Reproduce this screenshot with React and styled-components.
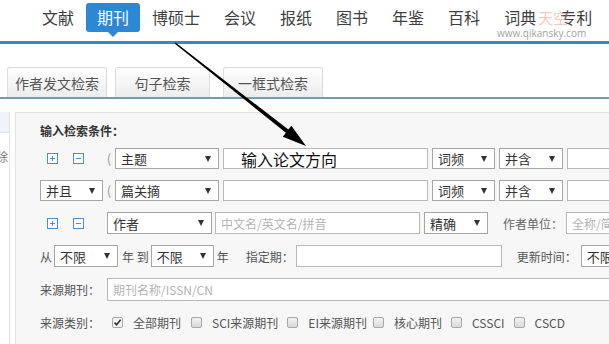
import React from 'react';
import styled, { createGlobalStyle, css } from 'styled-components';

const Global = createGlobalStyle`
  html, body { margin: 0; padding: 0; background: #fff; overflow: hidden; }
  body { width: 609px; height: 344px; font-family: "Noto Sans CJK SC", "Noto Sans", sans-serif; }
`;

const Page = styled.div`
  position: relative;
  width: 609px;
  height: 344px;
  overflow: hidden;
  background: #fff;
`;

const Nav = styled.nav`
  display: flex;
  align-items: flex-start;
  height: 44px;
  box-sizing: border-box;
  padding: 3px 0 0 30px;
  border-bottom: 3px solid #3a87c4;
`;

const NavItem = styled.div`
  position: relative;
  flex: none;
  height: 29px;
  line-height: 29px;
  padding: 0 12px;
  font-size: 16px;
  color: #3f3f3f;
  white-space: nowrap;
  ${(p) =>
    p.$active &&
    css`
      background: #2b88d5;
      color: #fff;
      border-radius: 3px;
      padding: 0 11px;
      &::after {
        content: '';
        position: absolute;
        left: 50%;
        bottom: -5px;
        margin-left: -5px;
        border-left: 5px solid transparent;
        border-right: 5px solid transparent;
        border-top: 5px solid #2b88d5;
      }
    `}
`;

const WaterMark = styled.div`
  position: absolute;
  left: 538px;
  top: 3px;
  font-size: 15px;
  line-height: 29px;
  color: rgba(236, 150, 135, 0.55);
  pointer-events: none;
`;

const WaterUrl = styled.div`
  position: absolute;
  left: 497px;
  top: 27px;
  font-family: "Open Sans", "DejaVu Sans", sans-serif;
  font-size: 10px;
  line-height: 12px;
  color: #a3a3a3;
  pointer-events: none;
`;

const TabBar = styled.div`
  display: flex;
  padding: 23px 0 0 7px;
  border-bottom: 2px solid #6f9dbf;
`;

const Tab = styled.div`
  flex: none;
  width: ${(p) => p.$w}px;
  margin-left: ${(p) => p.$ml || 0}px;
  height: 30px;
  box-sizing: border-box;
  border: 1px solid #dcdcdc;
  border-bottom: none;
  border-radius: 3px 3px 0 0;
  background: linear-gradient(#fefefe, #ededed);
  display: flex;
  align-items: center;
  justify-content: center;
  font-size: 14px;
  color: #555;
`;

const Main = styled.div`
  display: flex;
  margin-top: 13px;
  height: 260px;
`;

const Sidebar = styled.div`
  flex: none;
  width: 9px;
  border-right: 1px solid #e2e2e2;
  overflow: hidden;
`;

const SideHead = styled.div`
  height: 20px;
  background: #eef4fa;
  border-bottom: 1px solid #dfe6ee;
`;

const SideText = styled.div`
  margin: 17px 0 0 -4px;
  font-size: 12px;
  line-height: 14px;
  color: #777;
  white-space: nowrap;
`;

const Panel = styled.div`
  flex: none;
  margin-left: 5px;
  width: 720px;
  box-sizing: border-box;
  border: 1px solid #e2e2e2;
  background: #f7f7f7;
  padding: 10px 0 0 24px;
  display: flex;
  flex-direction: column;
  gap: 11px;
`;

const Title = styled.div`
  height: 16px;
  line-height: 16px;
  font-size: 12px;
  font-weight: bold;
  color: #333;
  margin-bottom: -2px;
`;

const Row = styled.div`
  display: flex;
  align-items: stretch;
  height: ${(p) => p.$h}px;
`;

const Lead = styled.div`
  flex: none;
  width: 63px;
  display: flex;
  align-items: center;
`;

const IconBtn = styled.span`
  flex: none;
  display: inline-flex;
  margin-left: ${(p) => p.$ml}px;
`;

const Paren = styled.span`
  flex: none;
  width: 12px;
  display: flex;
  align-items: center;
  justify-content: center;
  font-size: 13px;
  color: #999;
`;

const SelectBox = styled.div`
  flex: none;
  width: ${(p) => p.$w}px;
  margin-left: ${(p) => p.$ml || 0}px;
  box-sizing: border-box;
  border: 1px solid #a6a6a6;
  background: #fff;
  display: flex;
  align-items: center;
  justify-content: space-between;
  padding: 0 7px 0 5px;
  font-size: 13px;
  color: #333;
`;

const Caret = styled.span`
  width: 0;
  height: 0;
  border-left: 3px solid transparent;
  border-right: 3px solid transparent;
  border-top: 6px solid #333;
`;

const TextInput = styled.input`
  flex: none;
  width: ${(p) => p.$w}px;
  margin: 0 0 0 ${(p) => p.$ml || 0}px;
  box-sizing: border-box;
  border: 1px solid #b8b8b8;
  background: #fff;
  padding: 0 0 0 ${(p) => (p.$big ? 17 : 5)}px;
  font-family: "Noto Sans CJK SC", "Noto Sans", sans-serif;
  font-size: ${(p) => (p.$big ? 16 : 12)}px;
  color: #111;
  outline: none;
  &::placeholder { color: #b3b3b3; }
`;

const Label = styled.span`
  flex: none;
  margin-left: ${(p) => p.$ml || 0}px;
  display: flex;
  align-items: center;
  font-size: 12px;
  color: ${(p) => p.$c || '#555'};
  white-space: pre;
`;

const Check = styled.span`
  flex: none;
  align-self: center;
  width: 11px;
  height: 11px;
  box-sizing: border-box;
  margin-left: ${(p) => p.$ml || 0}px;
  border: 1px solid #a8a8a8;
  border-radius: 2px;
  background: ${(p) => (p.$on ? '#f4f4f4' : 'linear-gradient(#f3f3f3, #d9d9d9)')};
  display: flex;
  align-items: center;
  justify-content: center;
`;

const ArrowLayer = styled.svg`
  position: absolute;
  left: 0;
  top: 0;
  pointer-events: none;
`;

const PlusIcon = ({ minus }) => (
  <svg width="11" height="11" viewBox="0 0 11 11">
    <rect x="0.5" y="0.5" width="10" height="10" fill="#fff" stroke="#4a8fcf" />
    <line x1="3" y1="5.5" x2="8" y2="5.5" stroke="#4a8fcf" />
    {!minus && <line x1="5.5" y1="3" x2="5.5" y2="8" stroke="#4a8fcf" />}
  </svg>
);

const Sel = ({ w, ml, children }) => (
  <SelectBox $w={w} $ml={ml}>
    <span>{children}</span>
    <Caret />
  </SelectBox>
);

const CheckItem = ({ on, label, ml }) => (
  <>
    <Check $on={on} $ml={ml}>
      {on && (
        <svg width="9" height="9" viewBox="0 0 9 9">
          <path d="M1.5 4.6 L3.6 6.8 L7.6 1.8" fill="none" stroke="#333" strokeWidth="1.6" />
        </svg>
      )}
    </Check>
    <Label $ml={10}>{label}</Label>
  </>
);

const navItems = ['文献', '期刊', '博硕士', '会议', '报纸', '图书', '年鉴', '百科', '词典', '专利'];

export default function App() {
  return (
    <Page>
      <Global />
      <Nav>
        {navItems.map((n) => (
          <NavItem key={n} $active={n === '期刊'}>
            {n}
          </NavItem>
        ))}
      </Nav>
      <WaterMark>天空</WaterMark>
      <WaterUrl>www.qikansky.com</WaterUrl>

      <TabBar>
        <Tab $w={100}>作者发文检索</Tab>
        <Tab $w={95} $ml={8}>句子检索</Tab>
        <Tab $w={100} $ml={13}>一框式检索</Tab>
      </TabBar>

      <Main>
        <Sidebar>
          <SideHead />
          <SideText>除</SideText>
        </Sidebar>
        <Panel>
          <Title>输入检索条件：</Title>

          <Row $h={21}>
            <Lead>
              <IconBtn $ml={7}><PlusIcon /></IconBtn>
              <IconBtn $ml={15}><PlusIcon minus /></IconBtn>
            </Lead>
            <Paren>(</Paren>
            <Sel w={104}>主题</Sel>
            <TextInput $w={205} $ml={4} $big readOnly defaultValue="输入论文方向" />
            <Sel w={63} ml={4}>词频</Sel>
            <Sel w={64} ml={4}>并含</Sel>
            <TextInput $w={120} $ml={4} readOnly />
          </Row>

          <Row $h={21}>
            <Sel w={63}>并且</Sel>
            <Paren>(</Paren>
            <Sel w={104}>篇关摘</Sel>
            <TextInput $w={205} $ml={4} readOnly />
            <Sel w={63} ml={4}>词频</Sel>
            <Sel w={64} ml={4}>并含</Sel>
            <TextInput $w={120} $ml={4} readOnly />
          </Row>

          <Row $h={22}>
            <Lead>
              <IconBtn $ml={7}><PlusIcon /></IconBtn>
              <IconBtn $ml={15}><PlusIcon minus /></IconBtn>
            </Lead>
            <Sel w={105} ml={4}>作者</Sel>
            <TextInput $w={205} $ml={3} readOnly placeholder="中文名/英文名/拼音" />
            <Sel w={64} ml={4}>精确</Sel>
            <Label $ml={15} $c="#666">作者单位：</Label>
            <TextInput $w={120} $ml={3} readOnly placeholder="全称/简称/曾用名" />
          </Row>

          <Row $h={22}>
            <Label>从</Label>
            <Sel w={64} ml={2}>不限</Sel>
            <Label $ml={4}>年 到</Label>
            <Sel w={63} ml={2}>不限</Sel>
            <Label $ml={3}>年</Label>
            <Label $ml={17}>指定期：</Label>
            <TextInput $w={206} $ml={2} readOnly />
            <Label $ml={15}>更新时间：</Label>
            <Sel w={64} ml={4}>不限</Sel>
          </Row>

          <Row $h={23}>
            <Label>来源期刊：</Label>
            <TextInput $w={600} $ml={7} readOnly placeholder="期刊名称/ISSN/CN" />
          </Row>

          <Row $h={20}>
            <Label>来源类别：</Label>
            <CheckItem on label="全部期刊" ml={12} />
            <CheckItem label="SCI来源期刊" ml={10} />
            <CheckItem label="EI来源期刊" ml={9} />
            <CheckItem label="核心期刊" ml={6} />
            <CheckItem label="CSSCI" ml={9} />
            <CheckItem label="CSCD" ml={9} />
          </Row>
        </Panel>
      </Main>

      <ArrowLayer width="609" height="344" viewBox="0 0 609 344">
        <polygon
          points="174.5,43.6 285.9,132.8 282.8,136.7 306,146 291.4,125.7 288.3,129.6 175.5,42.4"
          fill="#000"
        />
      </ArrowLayer>
    </Page>
  );
}
